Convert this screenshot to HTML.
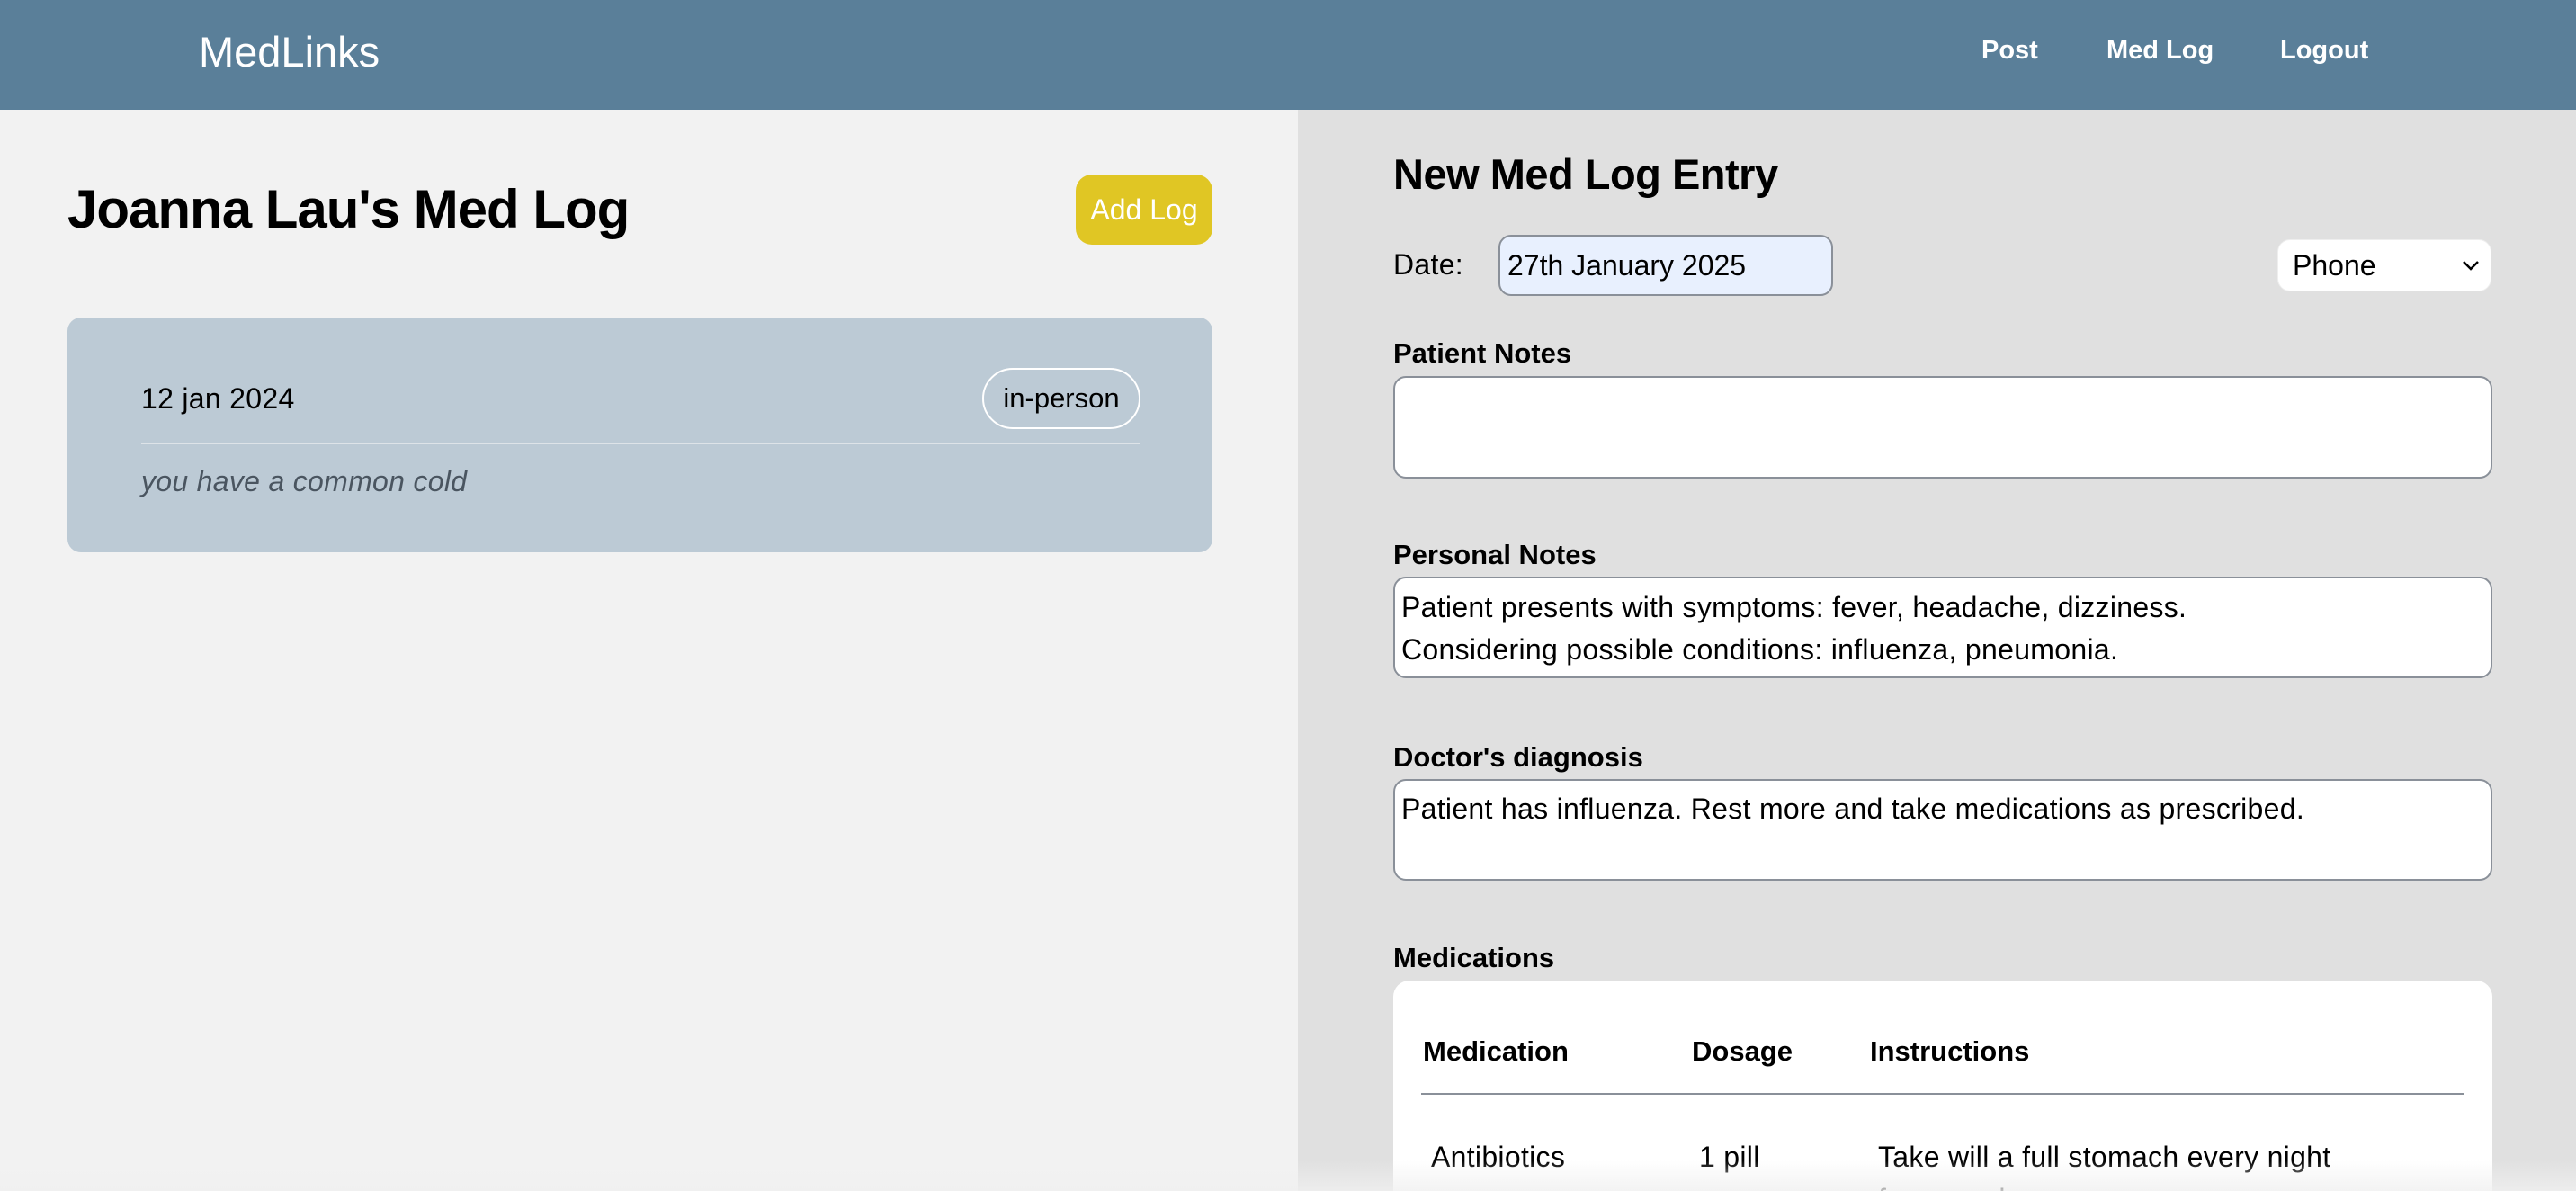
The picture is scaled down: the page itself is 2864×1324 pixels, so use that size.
<!DOCTYPE html>
<html style="width:2864px;height:1324px;overflow:hidden"><head><meta charset="utf-8"><style>
*{box-sizing:border-box;margin:0;padding:0}
body{width:2864px;height:1324px;overflow:hidden;font-family:"Liberation Sans",sans-serif;background:#e0e0e0;position:relative;color:#000}
.a{position:absolute;white-space:nowrap}
.hdr{left:0;top:0;width:2864px;height:122px;background:#5a7f99}
.left{left:0;top:122px;width:1443px;height:1202px;background:#f2f2f2}
.ta{position:absolute;left:1549px;width:1222px;background:#fff;border:2px solid #8a9099;border-radius:14px}
.lbl{font-size:31px;font-weight:bold}
.t31{font-size:32px;letter-spacing:0.3px}
</style></head><body>
<div class="a hdr"></div>
<div class="a" style="left:221px;top:30px;font-size:47px;color:#fff">MedLinks</div>
<div class="a" style="left:2203px;top:40px;font-size:29px;color:#fff;font-weight:600">Post</div>
<div class="a" style="left:2342px;top:40px;font-size:29px;color:#fff;font-weight:600">Med Log</div>
<div class="a" style="left:2535px;top:40px;font-size:29px;color:#fff;font-weight:600">Logout</div>
<div class="a left"></div>
<div class="a" style="left:75px;top:198px;font-size:60px;font-weight:bold;letter-spacing:-1px">Joanna Lau's Med Log</div>
<div class="a" style="left:1196px;top:194px;width:152px;height:78px;background:#e0c624;border-radius:18px;color:#fff;font-size:32px;line-height:78px;text-align:center">Add Log</div>
<div class="a" style="left:75px;top:353px;width:1273px;height:261px;background:#bccad5;border-radius:15px"></div>
<div class="a t31" style="left:157px;top:425px">12 jan 2024</div>
<div class="a" style="left:1092px;top:409px;width:176px;height:68px;border:2px solid #fff;border-radius:34px;font-size:31px;line-height:64px;text-align:center">in-person</div>
<div class="a" style="left:157px;top:492px;width:1111px;height:2px;background:#dde3e8"></div>
<div class="a t31" style="left:157px;top:517px;font-style:italic;color:#4a5560">you have a common cold</div>

<div class="a" style="left:1549px;top:166px;font-size:47px;font-weight:bold;letter-spacing:-0.5px">New Med Log Entry</div>
<div class="a t31" style="left:1549px;top:276px">Date:</div>
<div class="a" style="left:1666px;top:261px;width:372px;height:68px;background:#e8f0fe;border:2px solid #8a9099;border-radius:14px;font-size:32px;line-height:64px;padding-left:8px">27th January 2025</div>
<div class="a" style="left:2532px;top:266px;width:238px;height:58px;background:#fff;border-radius:14px;border:1px solid #eee;font-size:32px;line-height:56px;padding-left:16px">Phone
<svg style="position:absolute;right:12px;top:21px" width="20" height="14" viewBox="0 0 20 14"><path d="M2 3 L10 11 L18 3" fill="none" stroke="#000" stroke-width="2.5"/></svg></div>

<div class="a lbl" style="left:1549px;top:375px">Patient Notes</div>
<div class="ta" style="top:418px;height:114px"></div>
<div class="a lbl" style="left:1549px;top:599px">Personal Notes</div>
<div class="ta" style="top:641px;height:113px"></div>
<div class="a t31" style="left:1558px;top:652px;line-height:47px">Patient presents with symptoms: fever, headache, dizziness.<br>Considering possible conditions: influenza, pneumonia.</div>
<div class="a lbl" style="left:1549px;top:824px">Doctor's diagnosis</div>
<div class="ta" style="top:866px;height:113px"></div>
<div class="a t31" style="left:1558px;top:881px">Patient has influenza. Rest more and take medications as prescribed.</div>
<div class="a lbl" style="left:1549px;top:1047px">Medications</div>
<div class="a" style="left:1549px;top:1090px;width:1222px;height:234px;background:#fff;border-radius:18px 18px 0 0"></div>
<div class="a lbl" style="left:1582px;top:1151px">Medication</div>
<div class="a lbl" style="left:1881px;top:1151px">Dosage</div>
<div class="a lbl" style="left:2079px;top:1151px">Instructions</div>
<div class="a" style="left:1580px;top:1215px;width:1160px;height:2px;background:#8a9099"></div>
<div class="a t31" style="left:1591px;top:1268px">Antibiotics</div>
<div class="a t31" style="left:1889px;top:1268px">1 pill</div>
<div class="a t31" style="left:2088px;top:1268px">Take will a full stomach every night</div>
<div class="a t31" style="left:2088px;top:1315px">for a week</div>
<div class="a" style="left:0;top:1290px;width:2864px;height:34px;background:linear-gradient(rgba(255,255,255,0),rgba(240,240,240,0.8))"></div>
</body></html>
